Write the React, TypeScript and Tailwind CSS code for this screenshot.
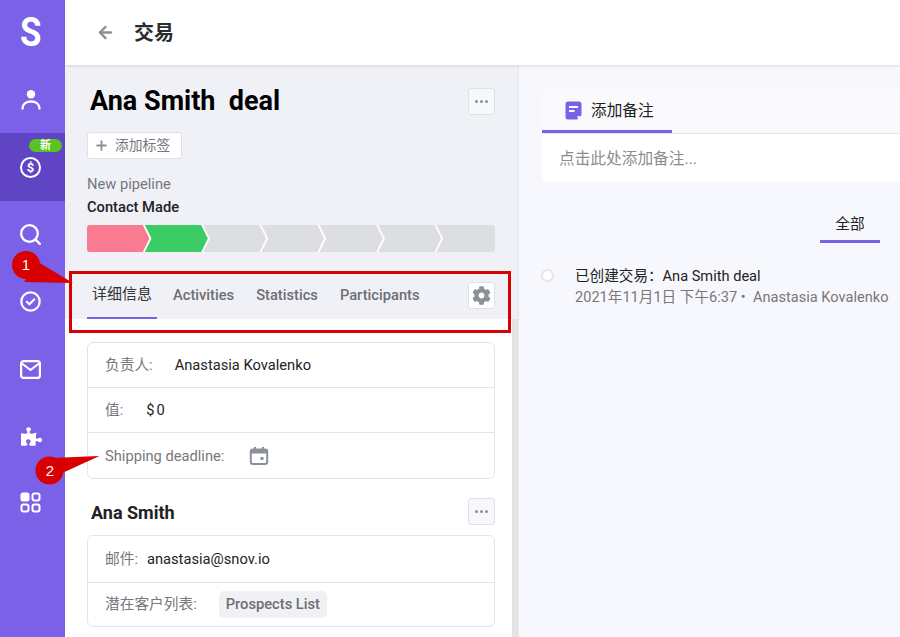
import React from 'react'
import { ArrowLeft, Plus, Search } from 'lucide-react'
import { FaCog, FaPuzzlePiece } from 'react-icons/fa'

const FONT = 'font-[Roboto,"Noto_Sans_CJK_SC",sans-serif]'

function UserIcon() {
  return (
    <svg width="20" height="21" viewBox="0 0 20 21" fill="none" stroke="white" strokeWidth="2.4">
      <circle cx="10" cy="5.200" r="4.200" fill="white" stroke="none" />
      <path d="M1.500 19.500c0-4.400 3.600-7 8.500-7s8.500 2.600 8.500 7" strokeLinecap="round" />
    </svg>
  )
}

function DollarIcon() {
  return (
    <div className="w-[21px] h-[21px] rounded-full border-[2.5px] border-white flex items-center justify-center text-white text-[13px] font-bold leading-none">
      $
    </div>
  )
}

function CheckIcon() {
  return (
    <svg width="21" height="21" viewBox="0 0 21 21" fill="none" stroke="white" strokeWidth="2.200">
      <circle cx="10.500" cy="10.500" r="9.200" />
      <path d="M6.800 10.800l2.600 2.500 4.800-4.800" strokeLinecap="round" strokeLinejoin="round" />
    </svg>
  )
}

function MailIcon() {
  return (
    <svg width="21" height="19" viewBox="0 0 21 19" fill="none" stroke="white" strokeWidth="2.200">
      <rect x="1.100" y="1.100" width="18.800" height="16.800" rx="2.500" />
      <path d="M2 3.500L10.500 10L19 3.500" strokeLinejoin="round" />
    </svg>
  )
}

function AppsIcon() {
  return (
    <svg width="21" height="21" viewBox="0 0 21 21" fill="none" stroke="white" strokeWidth="2">
      <rect x="0.500" y="0.500" width="9" height="9" rx="2.500" fill="white" stroke="none" />
      <rect x="12.500" y="1.500" width="7" height="7" rx="2" />
      <rect x="1.500" y="12.500" width="7" height="7" rx="2" />
      <rect x="12.500" y="12.500" width="7" height="7" rx="2" />
    </svg>
  )
}

function Sidebar() {
  return (
    <aside className="w-[65px] shrink-0 bg-[#7b61e8] flex flex-col items-stretch">
      <div className="h-[65px] pr-[3px] flex items-center justify-center text-white text-[41px] font-bold leading-none">
        <span className="scale-x-[0.85]">S</span>
      </div>
      <div className="h-[68px] pr-[4px] flex items-center justify-center"><UserIcon /></div>
      <div className="relative h-[68px] pr-[4px] bg-[#5f45c4] flex items-center justify-center">
        <DollarIcon />
        <span className="absolute left-[29px] top-[6px] w-[33px] h-[13px] rounded-full bg-[#58c322] text-white text-[11px] font-bold leading-[13px] text-center">新</span>
      </div>
      <div className="h-[67px] pr-[4px] flex items-center justify-center"><Search size={25} color="white" strokeWidth={2.2} /></div>
      <div className="h-[67px] pr-[4px] flex items-center justify-center"><CheckIcon /></div>
      <div className="h-[68px] pr-[4px] flex items-center justify-center"><MailIcon /></div>
      <div className="h-[66px] pr-[3px] flex items-center justify-center"><FaPuzzlePiece size={21} color="white" /></div>
      <div className="h-[67px] pr-[4px] flex items-center justify-center"><AppsIcon /></div>
    </aside>
  )
}

function DotsButton() {
  return (
    <button className="w-[27px] h-[27px] rounded-[3px] border border-[#dfe0e6] bg-[#f7f8fc] flex items-center justify-center gap-[2px]">
      <span className="w-[3px] h-[3px] rounded-full bg-[#8b9099]" />
      <span className="w-[3px] h-[3px] rounded-full bg-[#8b9099]" />
      <span className="w-[3px] h-[3px] rounded-full bg-[#8b9099]" />
    </button>
  )
}

function Pipeline() {
  const tops = [56.3, 114.7, 173, 231, 289.7, 348]
  return (
    <svg width="408" height="27" viewBox="0 0 408 27" className="block">
      <rect width="408" height="27" rx="3" fill="#dcdee1" />
      <path d="M3 0H56.300L63.500 13.500L56.300 27H3a3 3 0 0 1-3-3V3a3 3 0 0 1 3-3z" fill="#f97b92" />
      <path d="M56.300 0H114.700L121.900 13.500L114.700 27H56.300L63.500 13.500z" fill="#3bcc66" />
      {tops.map(x => (
        <path key={x} d={`M${x} -1L${x + 7.2} 13.500L${x} 28`} fill="none" stroke="white" strokeWidth="1.800" />
      ))}
    </svg>
  )
}

function Tabs() {
  const tabs = ['Activities', 'Statistics', 'Participants']
  return (
    <div className="h-[48px] flex items-stretch">
      <div className="w-[70px] h-[48px] border-b-2 border-[#7b61e8] flex items-center justify-center text-[15px] text-[#333]">详细信息</div>
      <div className="flex items-center gap-[22px] ml-[16px] flex-1">
        {tabs.map(t => (
          <span key={t} className="text-[14.700px] font-medium text-[#6e6e73]">{t}</span>
        ))}
      </div>
      <div className="flex items-center">
        <button className="w-[27px] h-[27px] rounded-[3px] border border-[#dfe0e6] bg-white flex items-center justify-center">
          <FaCog size={19} color="#8b9099" />
        </button>
      </div>
    </div>
  )
}

function Calendar() {
  return (
    <svg width="20" height="20" viewBox="0 0 20 20" fill="none" className="ml-[25px]">
      <rect x="1.800" y="3.500" width="16.400" height="14.500" rx="2" stroke="#8b9099" strokeWidth="2" />
      <rect x="1.800" y="3.500" width="16.400" height="4" fill="#8b9099" />
      <rect x="5" y="1" width="2" height="3" fill="#8b9099" />
      <rect x="13" y="1" width="2" height="3" fill="#8b9099" />
      <rect x="11.500" y="11" width="3" height="3" fill="#8b9099" />
    </svg>
  )
}

function LeftPanel() {
  return (
    <div className="w-[447px] shrink-0 flex flex-col">
      <div className="h-[254px] bg-[#f0f1f7] px-[22px] pr-[17px]">
        <div className="flex items-center justify-between pt-[23px] h-[50px]">
          <h1 className="text-[27px] font-bold text-black leading-none ml-[3px] whitespace-pre">Ana Smith  deal</h1>
          <DotsButton />
        </div>
        <button className="mt-[17px] w-[95px] h-[27px] rounded-[3px] border border-[#dfe0e6] bg-white flex items-center pl-[6px] gap-[6px] text-[13.800px] text-[#77777c]">
          <Plus size={15} color="#8b9099" strokeWidth={3} />
          <span>添加标签</span>
        </button>
        <p className="mt-[14px] h-[23px] leading-[23px] text-[14.700px] text-[#77777c]">New pipeline</p>
        <p className="h-[23px] leading-[23px] text-[14.700px] font-medium text-[#222]">Contact Made</p>
        <div className="mt-[6px]"><Pipeline /></div>
        <div className="mt-[19px]"><Tabs /></div>
      </div>
      <div className="flex-1 bg-white pl-[22px] pr-[17px] pt-[23px] text-[14.700px]">
        <div className="rounded-[6px] border border-[#e3e4e8]">
          <div className="h-[45px] pt-[1px] flex items-center px-[17px] border-b border-[#e3e4e8]">
            <span className="text-[#77777c]">负责人:</span>
            <span className="ml-[22px] text-[#222]">Anastasia Kovalenko</span>
          </div>
          <div className="h-[45px] pt-[1px] flex items-center px-[17px] border-b border-[#e3e4e8]">
            <span className="text-[#77777c]">值:</span>
            <span className="ml-[23px] text-[#222]">$<span className="ml-[2px]">0</span></span>
          </div>
          <div className="h-[45px] pt-[1px] flex items-center px-[17px]">
            <span className="text-[#77777c]">Shipping deadline:</span>
            <Calendar />
          </div>
        </div>
        <div className="flex items-center justify-between mt-[19px] h-[27px]">
          <h2 className="ml-[4px] mt-[2px] text-[18px] font-bold text-[#222]">Ana Smith</h2>
          <DotsButton />
        </div>
        <div className="mt-[10px] rounded-[6px] border border-[#e3e4e8]">
          <div className="h-[47px] pt-[1px] flex items-center px-[17px] border-b border-[#e3e4e8]">
            <span className="text-[#77777c]">邮件:</span>
            <span className="ml-[9px] text-[#222]">anastasia@snov.io</span>
          </div>
          <div className="h-[43px] flex items-center px-[17px]">
            <span className="text-[#77777c]">潜在客户列表:</span>
            <span className="ml-[22px] h-[27px] px-[7px] rounded-[5px] bg-[#f0f1f5] flex items-center font-medium text-[#6e6e73]">Prospects List</span>
          </div>
        </div>
      </div>
    </div>
  )
}

function RightPanel() {
  return (
    <div className="flex-1 min-w-0 bg-[#f7f8fd] pl-[23px] pt-[23px] overflow-hidden">
      <div className="w-[400px] h-[94px] rounded-l-[6px] bg-white overflow-hidden">
        <div className="h-[46px] bg-[#fafafc] border-b border-[#e5e5e8]">
          <div className="w-[130px] h-[45px] pt-[2px] border-b-[3px] border-[#7b61e8] flex items-center pl-[23px] gap-[9px] text-[15.700px] text-[#222]">
            <svg width="17" height="19" viewBox="0 0 17 19">
              <path d="M3 0.500H14a2.500 2.500 0 0 1 2.500 2.500V14L12 18.500H3A2.500 2.500 0 0 1 0.500 16V3A2.500 2.500 0 0 1 3 0.500z" fill="#7b61e8" />
              <rect x="4" y="5" width="9" height="2" fill="white" />
              <rect x="4" y="9" width="5.500" height="2" fill="white" />
              <rect x="12.500" y="15" width="2" height="2" fill="white" />
            </svg>
            <span className="mt-[2px]">添加备注</span>
          </div>
        </div>
        <p className="pl-[17px] mt-[13px] text-[15.700px] text-[#8c8c90]">点击此处添加备注...</p>
      </div>
      <div className="mt-[24px] flex justify-start pl-[278px]">
        <div className="w-[60px] h-[37px] pt-[2px] border-b-[3px] border-[#7b61e8] flex items-center justify-center text-[14.700px] text-[#222]">全部</div>
      </div>
      <div className="mt-[23px] -ml-[1px] flex gap-[21px]">
        <span className="mt-[3px] w-[13px] h-[13px] rounded-full border-2 border-[#e6e6ea] bg-white shrink-0" />
        <div className="text-[14.600px] leading-[21px] whitespace-nowrap">
          <p className="text-[#222]">已创建交易：Ana Smith deal</p>
          <p className="text-[#77777c]">2021年11月1日 下午6:37 • &nbsp;Anastasia Kovalenko</p>
        </div>
      </div>
    </div>
  )
}

function Annotations() {
  return (
    <>
      <div className="absolute left-[69px] top-[271px] w-[442px] h-[62px] border-[3px] border-[#d80000]" />
      <svg width="120" height="240" viewBox="0 0 120 240" className="absolute left-0 top-[245px]">
        <path d="M38 17L73 38L24 37z" fill="#d80000" />
        <circle cx="26" cy="20" r="14" fill="#d80000" />
        <path d="M99.500 211L52 213L60 229z" fill="#d80000" />
        <circle cx="49.500" cy="225.500" r="14" fill="#d80000" />
      </svg>
      <span className="absolute left-[12px] top-[255px] w-[28px] text-center text-white text-[15px] leading-[20px] font-['Liberation_Sans',sans-serif]">1</span>
      <span className="absolute left-[36px] top-[461px] w-[28px] text-center text-white text-[15px] leading-[20px] font-['Liberation_Sans',sans-serif]">2</span>
    </>
  )
}

export default function App() {
  return (
    <div className={`relative w-[900px] h-[637px] overflow-hidden flex bg-white ${FONT}`}>
      <Sidebar />
      <div className="flex-1 min-w-0 flex flex-col">
        <header className="relative z-10 h-[65px] bg-white flex items-center pl-[31px] gap-[19px] shadow-[0_1px_3px_rgba(0,0,0,0.12)]">
          <ArrowLeft size={19} color="#8b9099" strokeWidth={3} />
          <span className="text-[20px] font-bold text-[#2b2b2b]">交易</span>
        </header>
        <div className="flex-1 min-h-0 flex">
          <LeftPanel />
          <div className="w-[7px] shrink-0 flex flex-col border-r border-[#e8e9ef]">
            <div className="h-[254px] bg-[#f0f1f7]" />
            <div className="flex-1 bg-[#e3e3e3]" />
          </div>
          <RightPanel />
        </div>
      </div>
      <Annotations />
    </div>
  )
}
